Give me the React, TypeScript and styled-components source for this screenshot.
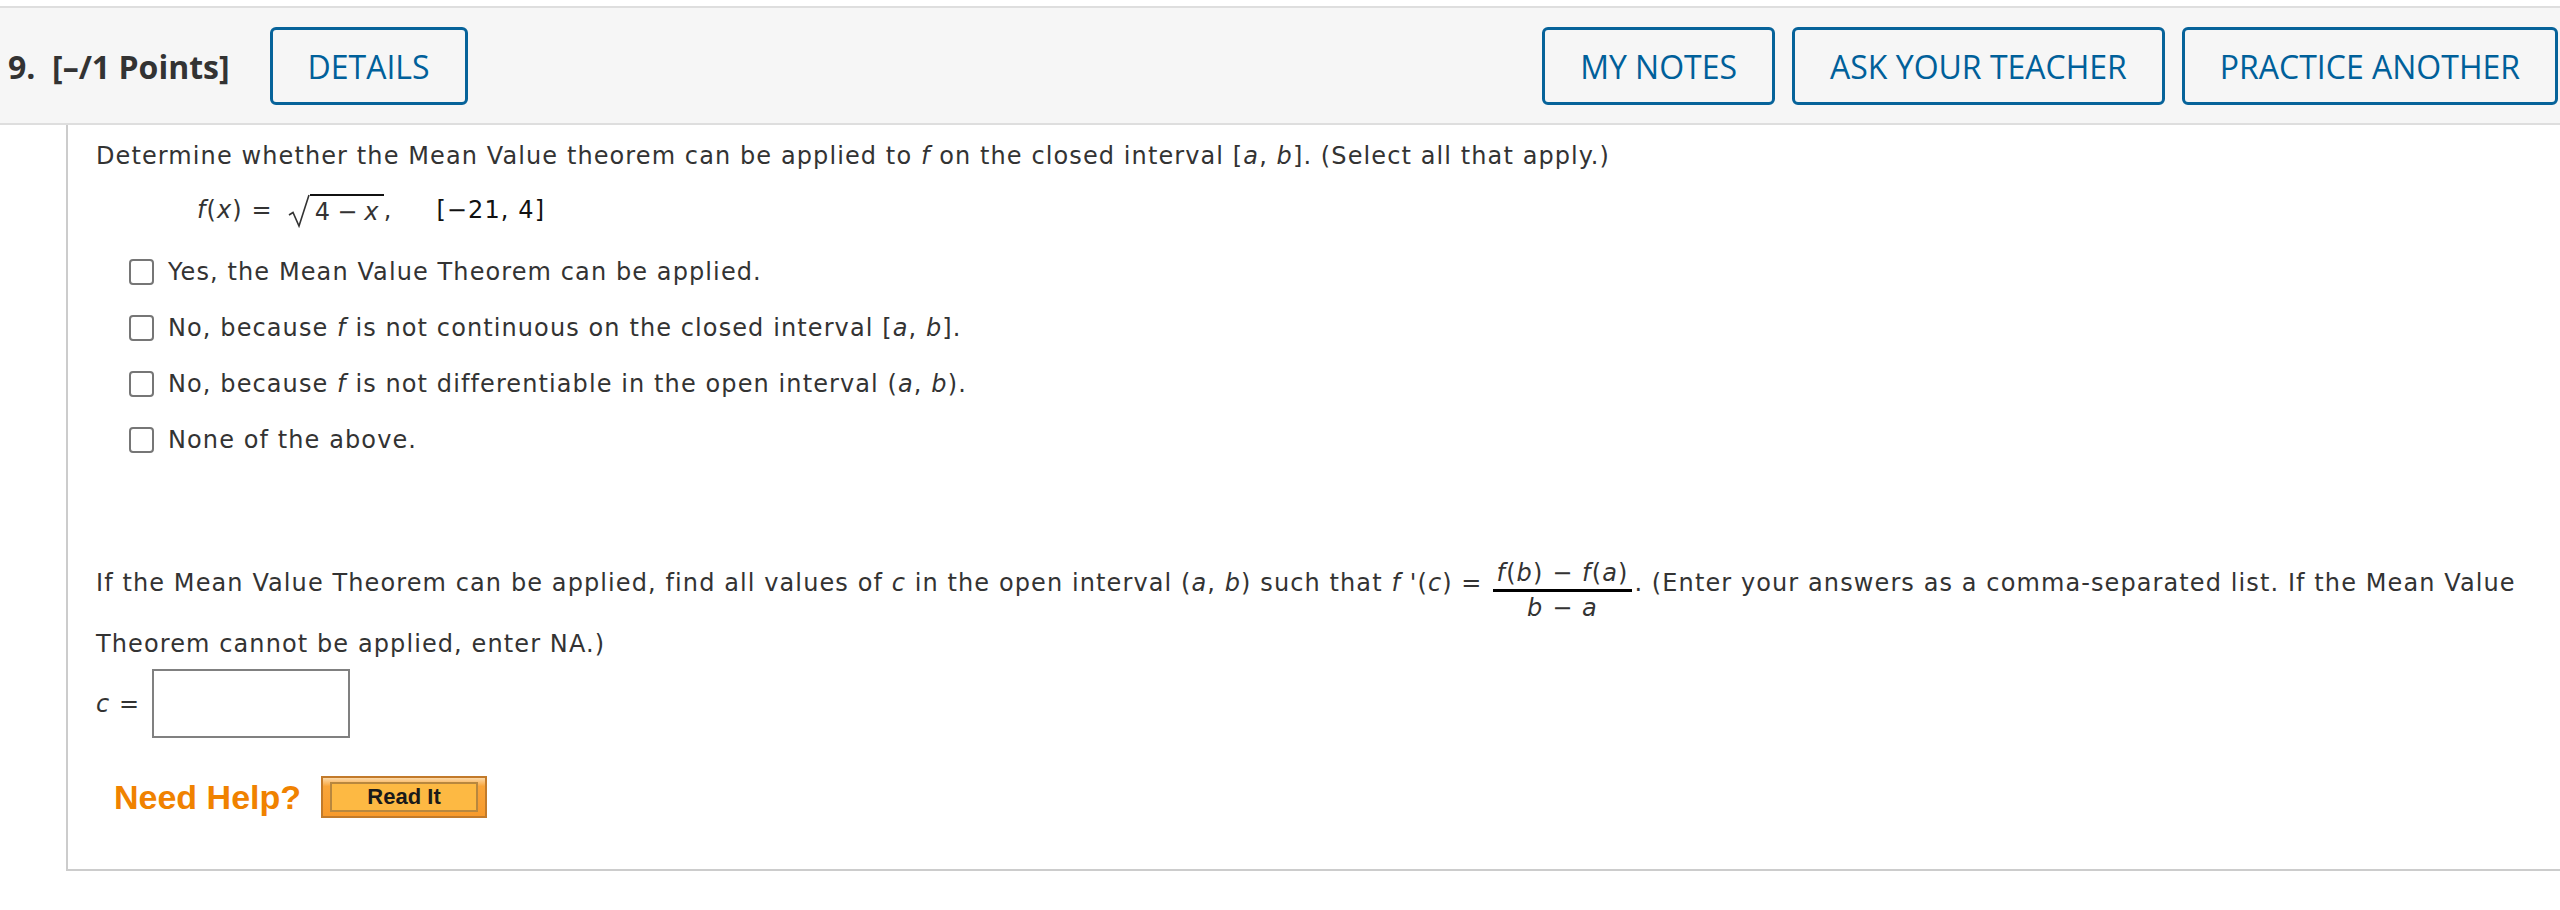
import React from "react";
import styled, { createGlobalStyle } from "styled-components";

const GlobalStyle = createGlobalStyle`
  html, body { margin: 0; padding: 0; background: #ffffff; }
  body { font-family: "DejaVu Sans", Verdana, sans-serif; color: #333333; }
`;

const Page = styled.div`
  width: 2560px;
  padding-top: 6px;
`;

const Header = styled.div`
  display: flex;
  align-items: center;
  background: #f6f6f6;
  border-top: 2px solid #dedede;
  border-bottom: 2px solid #dedede;
  padding: 19px 2px 18px 8px;
  font-family: "Open Sans", sans-serif;
`;

const Points = styled.div`
  font-weight: 700;
  font-size: 32px;
  color: #333333;
  white-space: pre;
  margin-right: 40px;
`;

const Spacer = styled.div`
  flex: 1;
`;

const ButtonGroup = styled.div`
  display: flex;
  gap: 17px;
`;

const HeaderButton = styled.button`
  height: 78px;
  box-sizing: border-box;
  display: flex;
  align-items: center;
  padding: 0 35px;
  border: 3px solid #07639a;
  border-radius: 6px;
  background: transparent;
  color: #00609a;
  font-family: "Open Sans", sans-serif;
  font-size: 32px;
  font-weight: 400;
  cursor: pointer;
`;

const Content = styled.div`
  margin-left: 66px;
  border-left: 2px solid #cccccc;
  border-bottom: 2px solid #cccccc;
  padding: 13px 20px 51px 28px;
  font-size: 24px;
  line-height: 36px;
  letter-spacing: 1.1px;
`;

const Para = styled.p`
  margin: 0;
`;

const Var = styled.i`
  font-style: italic;
`;

const Op = styled.span`
  margin: 0 6px;
`;

const Formula = styled.div`
  margin: 18px 0 0 101px;
  display: flex;
  align-items: center;
  height: 36px;
  white-space: pre;
`;

const Radical = styled.span`
  display: inline-flex;
  align-items: flex-start;
  margin-left: 15px;
`;

const RadicalSign = styled.svg`
  width: 22px;
  height: 34px;
  display: block;
  margin-top: 2px;
`;

const Radicand = styled.span`
  border-top: 2px solid #111;
  padding: 0 4px 0 5px;
  line-height: 32px;
  margin-top: 2px;
`;

const Interval = styled.span`
  color: #111;
  margin-left: 44px;
`;

const Options = styled.div`
  margin: 16px 0 0 33px;
  display: flex;
  flex-direction: column;
`;

const OptionRow = styled.label`
  display: flex;
  align-items: center;
  height: 56px;
  gap: 14px;
`;

const Checkbox = styled.input.attrs({ type: "checkbox" })`
  appearance: none;
  -webkit-appearance: none;
  margin: 0;
  width: 25px;
  height: 26px;
  box-sizing: border-box;
  border: 2px solid #767676;
  border-radius: 4px;
  background: #fff;
`;

const Question = styled.p`
  margin: 84px 0 0 0;
  line-height: 59px;
`;

const Fraction = styled.span`
  display: inline-flex;
  flex-direction: column;
  align-items: center;
  vertical-align: middle;
  line-height: 28px;
  margin: 0 2px 0 10px;
  position: relative;
  top: 7px;
`;

const Numer = styled.span`
  padding: 0 4px 2px;
  border-bottom: 3px solid #000;
`;

const Denom = styled.span`
  padding: 2px 4px 0;
`;

const AnswerRow = styled.div`
  display: flex;
  align-items: center;
  gap: 12px;
  margin-top: -5px;
`;

const AnswerInput = styled.input`
  width: 198px;
  height: 69px;
  box-sizing: border-box;
  border: 2px solid #808080;
  margin: 0;
`;

const HelpRow = styled.div`
  display: flex;
  align-items: center;
  gap: 20px;
  margin: 38px 0 0 18px;
  letter-spacing: 0;
`;

const NeedHelp = styled.span`
  font-family: "Liberation Sans", Arial, sans-serif;
  font-weight: 700;
  font-size: 34px;
  color: #f08200;
`;

const ReadIt = styled.button`
  width: 166px;
  height: 42px;
  box-sizing: border-box;
  padding: 4px 7px 4px 7px;
  border: 2px solid #c27a2a;
  background: linear-gradient(#fcd9a8 0%, #f9a53a 22%, #f79a2c 100%);
  display: flex;
  cursor: pointer;
`;

const ReadItInner = styled.span`
  flex: 1;
  display: flex;
  align-items: center;
  justify-content: center;
  border: 2px solid #b8873e;
  background: #fdb943;
  font-family: "Liberation Sans", Arial, sans-serif;
  font-weight: 700;
  font-size: 22px;
  color: #1a1a1a;
`;

const options = [
  <>Yes, the Mean Value Theorem can be applied.</>,
  <>
    No, because <Var>f</Var> is not continuous on the closed interval [<Var>a</Var>, <Var>b</Var>].
  </>,
  <>
    No, because <Var>f</Var> is not differentiable in the open interval (<Var>a</Var>, <Var>b</Var>).
  </>,
  <>None of the above.</>,
];

export default function App() {
  return (
    <>
      <GlobalStyle />
      <Page>
        <Header>
          <Points>{"9.  [–/1 Points]"}</Points>
          <HeaderButton>DETAILS</HeaderButton>
          <Spacer />
          <ButtonGroup>
            <HeaderButton>MY NOTES</HeaderButton>
            <HeaderButton>ASK YOUR TEACHER</HeaderButton>
            <HeaderButton>PRACTICE ANOTHER</HeaderButton>
          </ButtonGroup>
        </Header>
        <Content>
          <Para>
            Determine whether the Mean Value theorem can be applied to <Var>f</Var> on the closed interval [
            <Var>a</Var>, <Var>b</Var>]. (Select all that apply.)
          </Para>
          <Formula>
            <span>
              <Var>f</Var>(<Var>x</Var>) =
            </span>
            <Radical>
              <RadicalSign viewBox="0 0 22 34">
                <path d="M1 21 L5 18.5 L11 32 L21 1" fill="none" stroke="#333" strokeWidth="1.6" />
              </RadicalSign>
              <Radicand>
                4<Op>−</Op>
                <Var>x</Var>
              </Radicand>
            </Radical>
            <span>,</span>
            <Interval>[−21, 4]</Interval>
          </Formula>
          <Options>
            {options.map((o, i) => (
              <OptionRow key={i}>
                <Checkbox />
                <span>{o}</span>
              </OptionRow>
            ))}
          </Options>
          <Question>
            If the Mean Value Theorem can be applied, find all values of <Var>c</Var> in the open interval (
            <Var>a</Var>, <Var>b</Var>) such that <Var>f</Var> '(<Var>c</Var>) =
            <Fraction>
              <Numer>
                <Var>f</Var>(<Var>b</Var>) − <Var>f</Var>(<Var>a</Var>)
              </Numer>
              <Denom>
                <Var>b</Var> − <Var>a</Var>
              </Denom>
            </Fraction>
            . (Enter your answers as a comma-separated list. If the Mean Value Theorem cannot be applied, enter NA.)
          </Question>
          <AnswerRow>
            <span>
              <Var>c</Var> =
            </span>
            <AnswerInput type="text" />
          </AnswerRow>
          <HelpRow>
            <NeedHelp>Need Help?</NeedHelp>
            <ReadIt>
              <ReadItInner>Read It</ReadItInner>
            </ReadIt>
          </HelpRow>
        </Content>
      </Page>
    </>
  );
}
